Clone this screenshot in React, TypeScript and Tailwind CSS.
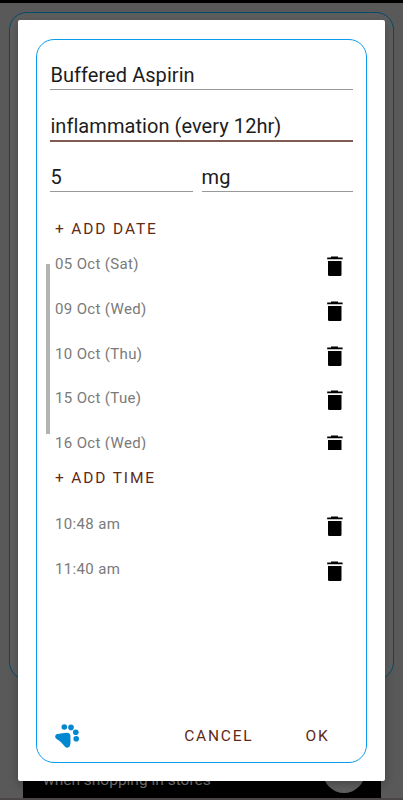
import React from "react";

interface IEntry {
  id: number;
  label: string;
}

const dates: IEntry[] = [
  { id: 1, label: "05 Oct (Sat)" },
  { id: 2, label: "09 Oct (Wed)" },
  { id: 3, label: "10 Oct (Thu)" },
  { id: 4, label: "15 Oct (Tue)" },
  { id: 5, label: "16 Oct (Wed)" },
];

const times: IEntry[] = [
  { id: 1, label: "10:48 am" },
  { id: 2, label: "11:40 am" },
];

const TrashIcon: React.FC = () => (
  <svg width="16" height="21" viewBox="0 0 16 21" className="block">
    <path d="M4 0.5h7v1h4.6v1.8H0.2V1.5H4z" fill="#000" />
    <path d="M0.4 3.2h15.2v0.9H0.4z" fill="#bdbdbd" />
    <path d="M1 5h13.5v13.8a1.3 1.3 0 0 1-1.3 1.3H2.3A1.3 1.3 0 0 1 1 18.8z" fill="#000" />
  </svg>
);

const PawIcon: React.FC = () => (
  <svg width="26" height="26" viewBox="0 0 26 26" className="block" fill="#0288d1">
    <circle cx="10.3" cy="4" r="2.8" />
    <circle cx="17" cy="4.4" r="2.8" />
    <circle cx="21.8" cy="9.3" r="2.8" />
    <circle cx="22.2" cy="15.8" r="2.8" />
    <path d="M3.4 11.1C6.2 10.9 9.7 9.7 13 9.7c2.4 0 3.5 1.2 3.4 3.5-.2 3.3.7 5.8-.4 9.3-.7 2.2-3.2 3-5 1.2-2.6-2.6-4.7-5.8-8.1-7.4C.3 14.8.9 11.6 3.4 11.1z" />
  </svg>
);

const Row: React.FC<{ label: string }> = ({ label }) => (
  <li className="flex h-[44.7px] shrink-0 items-start justify-between pl-[18px] pr-[23px]">
    <span className="text-[15px] leading-[18px] tracking-[0.35px] text-[#7a7a7a]">{label}</span>
    <button className="mt-px" aria-label="Delete">
      <TrashIcon />
    </button>
  </li>
);

const Field: React.FC<{ value: string; active?: boolean }> = ({ value, active }) => (
  <div
    className={`flex-1 pb-[2px] text-[20px] leading-[24px] tracking-[0.06px] text-[#1c1c1c] ${
      active ? "border-b-2 border-[#805b50]" : "border-b border-[#999]"
    }`}
  >
    {value}
  </div>
);

const Dialog: React.FC = () => (
  <div className="absolute left-[18px] top-[20px] h-[761px] w-[367px] rounded-[2px] bg-white px-[18px] pb-[18px] pt-[19px] shadow-[0_3px_10px_rgba(0,0,0,0.25)]">
    <div className="flex h-full flex-col rounded-[18px] border border-[#0a9bec]">
      <div className="flex h-[172px] shrink-0 flex-col px-[13.4px] pt-[23px]">
        <div className="flex h-[51px]">
          <div className="w-full">
            <Field value="Buffered Aspirin" />
          </div>
        </div>
        <div className="flex h-[51px]">
          <div className="w-full">
            <Field value="inflammation (every 12hr)" active />
          </div>
        </div>
        <div className="flex items-start gap-[9px]">
          <Field value="5" />
          <div className="flex w-[151px]">
            <Field value="mg" />
          </div>
        </div>
      </div>

      <button className="h-[35px] shrink-0 pl-[18px] text-left text-[15.5px] font-normal leading-[35px] tracking-[1.85px] text-[#5f2a17]">
        + ADD DATE
      </button>
      <div className="flex h-[203px] shrink-0 overflow-hidden pt-[8px]">
        <div className="relative w-full">
          <div className="absolute left-[9px] top-[9px] h-[170px] w-[4px] bg-[#b3b3b3]" />
          <ul className="flex h-[195px] flex-col overflow-hidden pt-[0.4px]">
            {dates.map((d) => (
              <Row key={d.id} label={d.label} />
            ))}
          </ul>
        </div>
      </div>

      <button className="h-[55px] shrink-0 pl-[18px] text-left text-[15.5px] font-normal leading-[57px] tracking-[1.85px] text-[#5f2a17]">
        + ADD TIME
      </button>
      <ul className="flex flex-1 flex-col pt-[10px]">
        {times.map((t) => (
          <Row key={t.id} label={t.label} />
        ))}
      </ul>

      <div className="flex h-[56px] shrink-0 items-center pl-[17px] pr-[36.5px] pt-[4.5px] text-[15.5px] font-normal tracking-[1.8px] text-[#5f2a17]">
        <PawIcon />
        <button className="ml-auto">CANCEL</button>
        <button className="ml-[52px]">OK</button>
      </div>
    </div>
  </div>
);

export default function App() {
  return (
    <div className="relative flex h-[800px] w-[403px] flex-col overflow-hidden bg-[#595959] font-['Roboto',sans-serif]">
      <div className="h-[3px] shrink-0 bg-black" />
      <div className="mx-[9px] mt-[9px] h-[668px] shrink-0 rounded-[18px] border border-[#024a70] bg-[#5e5e5e]" />
      <div className="ml-[23px] mt-auto flex h-[38px] w-[358px] shrink-0 items-start justify-between overflow-hidden bg-black pl-[20px] pr-[16px]">
        <span className="mt-[10px] text-[15.5px] leading-[20px] text-[#777]">
          when shopping in stores
        </span>
        <div className="-mt-[9px] h-[42px] w-[42px] shrink-0 rounded-full bg-[#5e5e5e]" />
      </div>
      <div className="h-[2px] shrink-0 bg-[#4a4648]" />
      <Dialog />
    </div>
  );
}
